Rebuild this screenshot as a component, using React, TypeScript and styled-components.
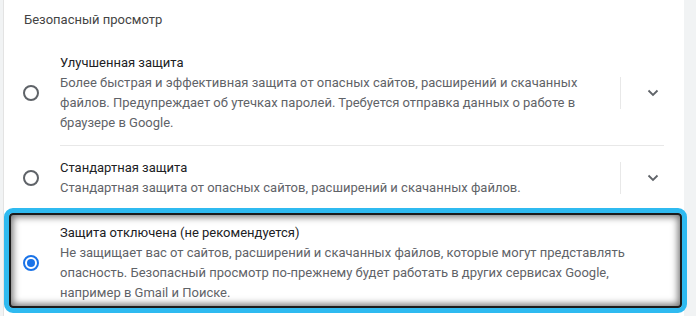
import styled, { createGlobalStyle } from 'styled-components'

const GlobalStyle = createGlobalStyle`
  body {
    margin: 0;
    background: #f1f3f4;
    font-family: Roboto, "Liberation Sans", sans-serif;
  }
`

interface IOption {
  title: string
  description: string
  checked?: boolean
  expandable?: boolean
  highlighted?: boolean
}

const OPTIONS: IOption[] = [
  {
    title: 'Улучшенная защита',
    description:
      'Более быстрая и эффективная защита от опасных сайтов, расширений и скачанных файлов. Предупреждает об утечках паролей. Требуется отправка данных о работе в браузере в Google.',
    expandable: true,
  },
  {
    title: 'Стандартная защита',
    description:
      'Стандартная защита от опасных сайтов, расширений и скачанных файлов.',
    expandable: true,
  },
  {
    title: 'Защита отключена (не рекомендуется)',
    description:
      'Не защищает вас от сайтов, расширений и скачанных файлов, которые могут представлять опасность. Безопасный просмотр по-прежнему будет работать в других сервисах Google, например в Gmail и Поиске.',
    checked: true,
    highlighted: true,
  },
]

function Chevron() {
  return (
    <svg width="12" height="8" viewBox="0 0 12 8">
      <polyline
        points="1.5,1.5 6,6 10.5,1.5"
        fill="none"
        stroke="#5f6368"
        strokeWidth="1.8"
      />
    </svg>
  )
}

function Option({ title, description, checked, expandable, highlighted }: IOption) {
  return (
    <OptionRow $expandable={!!expandable}>
      <Radio $checked={!!checked} />
      <OptionText>
        <OptionTitle>{title}</OptionTitle>
        <OptionDescription>{description}</OptionDescription>
      </OptionText>
      {expandable && (
        <ExpandCell>
          <Chevron />
        </ExpandCell>
      )}
      {highlighted && <Highlight />}
    </OptionRow>
  )
}

export default function App() {
  return (
    <>
      <GlobalStyle />
      <Card>
        <Heading>Безопасный просмотр</Heading>
        {OPTIONS.map((option, i) => (
          <div key={option.title}>
            {i > 0 && <Divider />}
            <Option {...option} />
          </div>
        ))}
      </Card>
    </>
  )
}

const Card = styled.section`
  margin-left: 3px;
  width: 680px;
  height: 316px;
  background: #fff;
  border-left: 1px solid #e3e3e3;
`

const Heading = styled.h2`
  margin: 0;
  padding: 10px 0 11px 20px;
  font-size: 13px;
  line-height: 20px;
  font-weight: 400;
  color: #444;
`

const OptionRow = styled.div<{ $expandable: boolean }>`
  position: relative;
  display: flex;
  align-items: center;
  padding: 12px ${(p) => (p.$expandable ? '0' : '20px')} 12px 0;
`

const Radio = styled.span<{ $checked: boolean }>`
  flex: none;
  box-sizing: border-box;
  width: 16px;
  height: 16px;
  margin: 0 21px 0 19px;
  border-radius: 50%;
  border: 2px solid ${(p) => (p.$checked ? '#1a73e8' : '#5f6368')};
  display: flex;
  align-items: center;
  justify-content: center;

  &::after {
    content: '';
    display: ${(p) => (p.$checked ? 'block' : 'none')};
    width: 8px;
    height: 8px;
    border-radius: 50%;
    background: #1a73e8;
  }
`

const OptionText = styled.div`
  flex: 1;
  font-size: 13px;
  line-height: 20px;
`

const OptionTitle = styled.div`
  color: #202124;
`

const OptionDescription = styled.div`
  color: #5f6368;
`

const ExpandCell = styled.div`
  flex: none;
  width: 63px;
  height: 32px;
  border-left: 1px solid #e8e8e8;
  display: flex;
  align-items: center;
  justify-content: center;
`

const Divider = styled.hr`
  margin: 0 20px 0 56px;
  border: 0;
  border-top: 1px solid #e8e8e8;
`

const Highlight = styled.div`
  position: absolute;
  top: -3px;
  left: 0;
  right: -3px;
  bottom: 2px;
  border: 5px solid #2fbaf0;
  border-radius: 9px;
  box-shadow: inset 0 0 0 2px #1b1b1b, inset 0 0 7px 4px rgba(0, 0, 0, 0.55);
  pointer-events: none;
`
